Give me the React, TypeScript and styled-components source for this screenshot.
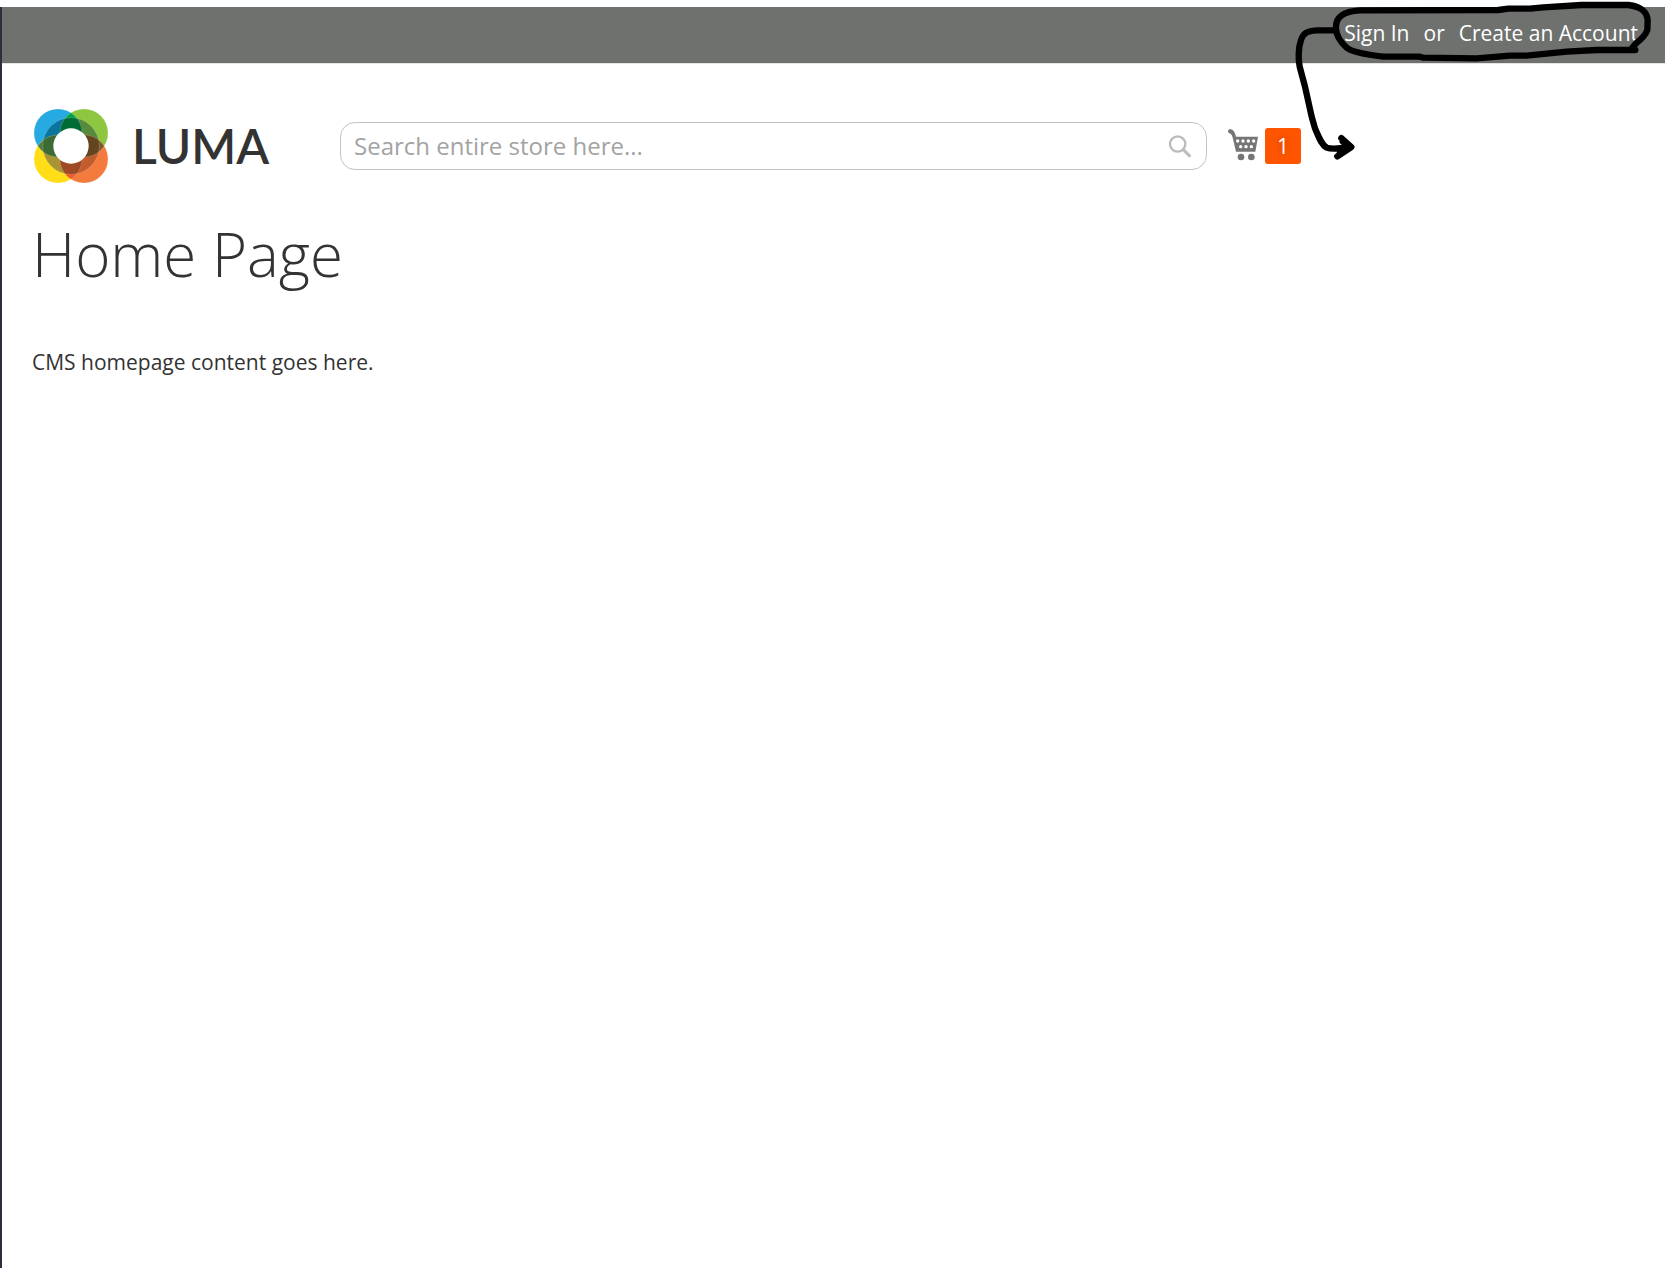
import React from 'react';
import styled, { createGlobalStyle } from 'styled-components';

const GlobalStyle = createGlobalStyle`
  *, *::before, *::after { box-sizing: border-box; }
  body {
    margin: 0;
    background: #fff;
    color: #333;
    font-family: 'Open Sans', 'Noto Sans', sans-serif;
    font-size: 21px;
    line-height: 32px;
  }
`;

const Frame = styled.div`
  position: relative;
  display: flex;
  flex-direction: column;
  min-height: 100vh;
  padding-top: 7px;
  background: #fdfeff;
`;

const Page = styled.div`
  flex: 1;
  border-left: 2px solid #302c42;
  background: #fff;
`;

const TopBar = styled.nav`
  display: flex;
  justify-content: flex-end;
  align-items: center;
  gap: 14px;
  height: 57px;
  padding: 0 27px 5px;
  border-bottom: 1px solid #e4e4e0;
  background: #6e716e;
  color: #fff;
`;

const TopLink = styled.a`
  color: #fff;
  text-decoration: none;
`;

const Header = styled.header`
  display: grid;
  grid-template-columns: 274px minmax(200px, 1fr) auto 332px;
  align-items: center;
  padding: 45px 32px 0;
`;

const Brand = styled.a`
  display: flex;
  align-items: center;
  gap: 24px;
  color: #333;
  text-decoration: none;
`;

const Wordmark = styled.span`
  font-family: Lato, sans-serif;
  font-size: 48px;
  font-weight: 600;
  line-height: 56px;
`;

const SearchForm = styled.form`
  display: flex;
  align-items: center;
  height: 48px;
  padding: 0 14px 0 13px;
  margin-left: 32px;
  border: 1px solid #c2c2c2;
  border-radius: 15px;
`;

const SearchInput = styled.input`
  flex: 1;
  min-width: 0;
  padding: 0;
  border: 0;
  outline: 0;
  background: transparent;
  color: #333;
  font: inherit;
  font-size: 24px;
  &::placeholder { color: #a3a3a3; opacity: 1; }
`;

const IconButton = styled.button`
  display: flex;
  padding: 0;
  border: 0;
  background: transparent;
  cursor: pointer;
`;

const CartLink = styled.a`
  display: flex;
  align-items: center;
  gap: 6px;
  margin-left: 21px;
  text-decoration: none;
`;

const Count = styled.span`
  width: 36px;
  border-radius: 3px;
  background: #ff5501;
  color: #fff;
  line-height: 36px;
  text-align: center;
  text-shadow: 0 0 8px rgba(0, 0, 0, 0.35);
`;

const Main = styled.main`
  padding: 29px 30px;
`;

const Title = styled.h1`
  margin: 0 0 50px;
  font-size: 60px;
  font-weight: 300;
  line-height: 84px;
`;

const Text = styled.p`
  margin: 0;
`;

const Annotation = styled.svg`
  position: absolute;
  top: 0;
  right: 0;
  pointer-events: none;
`;

const petals = [
  { id: 'blue', cx: 114, cy: 99, fill: '#27aae1', inner: '#0b769d' },
  { id: 'green', cx: 192, cy: 99, fill: '#8dc63f', inner: '#588a3d' },
  { id: 'yellow', cx: 114, cy: 177, fill: '#ffde17', inner: '#a99434' },
  { id: 'orange', cx: 192, cy: 177, fill: '#f47b3e', inner: '#c15d2e' },
];

const overlaps = [
  { clip: 'blue', cx: 192, cy: 99, outer: '#00a14b', inner: '#006b37' },
  { clip: 'blue', cx: 114, cy: 177, outer: '#4f7f3b', inner: '#3c6b35' },
  { clip: 'orange', cx: 192, cy: 99, outer: '#7b5a2b', inner: '#63461f' },
  { clip: 'orange', cx: 114, cy: 177, outer: '#ef5a28', inner: '#9f4a24' },
];

const LogoMark = () => (
  <svg width="74" height="74" viewBox="42 27 222 222" aria-hidden="true">
    <defs>
      {petals.map((p) => (
        <clipPath id={p.id} key={p.id}>
          <circle cx={p.cx} cy={p.cy} r="72" />
        </clipPath>
      ))}
      <clipPath id="ring">
        <circle cx="153" cy="138" r="85" />
      </clipPath>
    </defs>
    {petals.map((p) => (
      <circle key={p.id} cx={p.cx} cy={p.cy} r="72" fill={p.fill} />
    ))}
    {overlaps.map((o) => (
      <g key={o.outer} clipPath={`url(#${o.clip})`}>
        <circle cx={o.cx} cy={o.cy} r="72" fill={o.outer} />
      </g>
    ))}
    <g clipPath="url(#ring)">
      {petals.map((p) => (
        <circle key={p.id} cx={p.cx} cy={p.cy} r="72" fill={p.inner} />
      ))}
      {overlaps.map((o) => (
        <g key={o.inner} clipPath={`url(#${o.clip})`}>
          <circle cx={o.cx} cy={o.cy} r="72" fill={o.inner} />
        </g>
      ))}
    </g>
    <g fill="none" stroke="#fff" strokeOpacity="0.3" strokeWidth="1.5">
      <circle cx="153" cy="138" r="85" />
      {petals.map((p) => (
        <circle key={p.id} cx={p.cx} cy={p.cy} r="72" />
      ))}
    </g>
    <circle cx="153" cy="138" r="53" fill="#fff" />
  </svg>
);

const SearchIcon = () => (
  <svg width="23" height="23" viewBox="86 74 69 69" fill="none" stroke="#bcbcbc" aria-hidden="true">
    <circle cx="112" cy="101" r="23" strokeWidth="7" />
    <path d="M129 118 L150 139" strokeWidth="9" />
  </svg>
);

const CartIcon = () => (
  <svg width="31" height="34" viewBox="263 56 93 102" aria-hidden="true">
    <g fill="#757575">
      <circle cx="269" cy="63" r="6" />
      <path d="M268 57 C280 57 284 67 287 79 L353 79 L345 124 L287 124 L278 86 C276 76 273 70 267 69 Z" />
      <circle cx="302" cy="140" r="10" />
      <circle cx="333" cy="140" r="10" />
    </g>
    <g fill="#fff">
      {[292, 308, 324, 340].map((x) => <circle key={x} cx={x} cy="92" r="5" />)}
      {[301, 317, 333].map((x) => <circle key={x} cx={x} cy="109" r="5" />)}
    </g>
  </svg>
);

export default function App() {
  return (
    <Frame>
      <GlobalStyle />
      <Page>
        <TopBar aria-label="Account">
          <TopLink href="#sign-in">Sign In</TopLink>
          <span>or</span>
          <TopLink href="#create-account">Create an Account</TopLink>
        </TopBar>
        <Header>
          <Brand href="#home">
            <LogoMark />
            <Wordmark>LUMA</Wordmark>
          </Brand>
          <SearchForm role="search" onSubmit={(e) => e.preventDefault()}>
            <SearchInput type="text" aria-label="Search" placeholder="Search entire store here..." />
            <IconButton type="submit" aria-label="Search">
              <SearchIcon />
            </IconButton>
          </SearchForm>
          <CartLink href="#cart" aria-label="My Cart">
            <CartIcon />
            <Count>1</Count>
          </CartLink>
        </Header>
        <Main>
          <Title>Home Page</Title>
          <Text>CMS homepage content goes here.</Text>
        </Main>
      </Page>
      <Annotation
        width="385"
        height="180"
        viewBox="0 0 1155 540"
        fill="none"
        stroke="#000"
        strokeWidth="19"
        strokeLinecap="round"
        strokeLinejoin="round"
        aria-hidden="true"
      >
        <path d="M1066 150 L950 150 L860 155 L740 167 L690 167 L590 175 L430 173 L420 170 L310 170 C255 164 215 156 200 143 C180 125 168 105 168 85 C166 50 190 34 240 31 L655 30 L685 26 L750 26 L790 22 L905 15 L1045 15 C1085 20 1100 35 1103 60 L1102 90 C1095 110 1080 120 1068 130 L1056 144" />
        <path d="M168 91 L110 91 C80 93 70 100 63 120 C54 145 55 180 59 200 L75 260 L95 350 L105 385 C118 415 125 435 140 443 C155 449 175 447 212 441" />
        <path d="M184 414 L214 441 L172 469 M188 424 L206 441 L180 458" />
      </Annotation>
    </Frame>
  );
}
